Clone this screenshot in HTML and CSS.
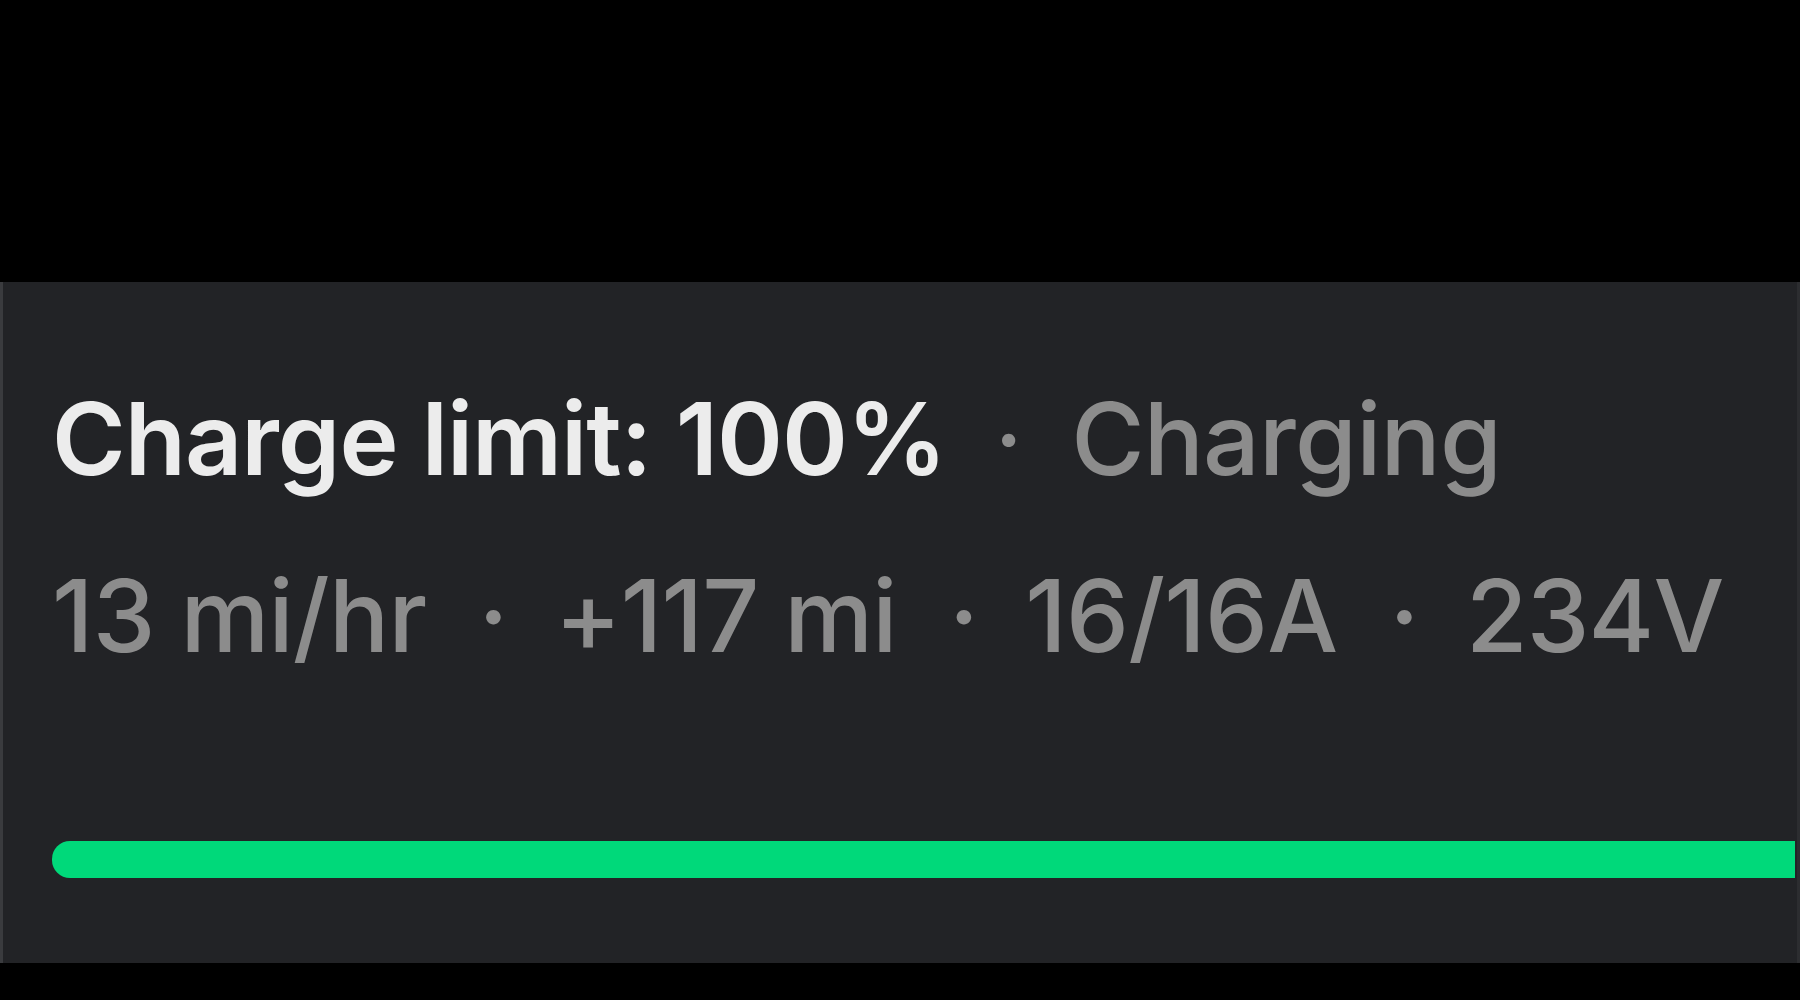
FILE: index.html
```html
<!DOCTYPE html>
<html>
<head>
    <title>Charging</title>
    <link rel="stylesheet" href="styles.css">
</head>
<body>
    <div class="charge-panel">
        <div class="charge-title">
            <span class="limit">Charge limit: 100%</span>
            <span class="sep">·</span>
            <span class="state">Charging</span>
        </div>
        <div class="charge-stats">
            <span>13 mi/hr</span>
            <span class="sep">·</span>
            <span>+117 mi</span>
            <span class="sep">·</span>
            <span>16/16A</span>
            <span class="sep">·</span>
            <span>234V</span>
        </div>
        <div class="charge-bar">
            <div class="charge-fill" style="width: 100%"></div>
        </div>
    </div>
</body>
</html>
```

FILE: styles.css
```css
html, body {
    margin: 0;
    padding: 0;
    background: #000;
    height: 100%;
}
body {
    font-family: Inter, "Noto Sans", sans-serif;
    padding-top: 282px;
    box-sizing: border-box;
}
.charge-panel {
    height: 681px;
    background: #222326;
    border-left: 3px solid #3a3b3e;
    border-right: 3px solid #2c2d30;
    padding: 0 2px 0 49px;
    box-sizing: border-box;
    display: flex;
    flex-direction: column;
}
.charge-title,
.charge-stats {
    display: flex;
    align-items: baseline;
    font-size: 100px;
    line-height: 1;
    white-space: nowrap;
}
.charge-title {
    margin-top: 107px;
}
.limit {
    color: #ececec;
    font-weight: 600;
    letter-spacing: -1px;
}
.state {
    color: #8c8c8c;
    font-weight: 500;
    letter-spacing: -0.8px;
}
.charge-title .sep {
    padding: 0 48px;
}
.charge-stats {
    margin-top: 77px;
    color: #8c8c8c;
    font-weight: 500;
    letter-spacing: -0.8px;
}
.charge-stats .sep {
    padding: 0 47px 0 52px;
}
.sep {
    color: #8c8c8c;
}
.charge-bar {
    margin-top: 175px;
    height: 37px;
    border-radius: 18px 0 0 18px;
    overflow: hidden;
}
.charge-fill {
    height: 100%;
    background: #00d97a;
}
```
